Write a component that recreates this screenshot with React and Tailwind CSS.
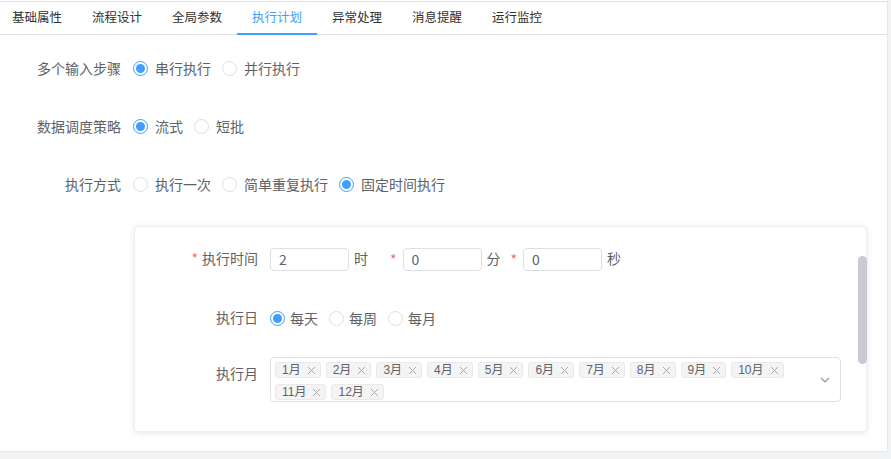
import React from "react";

const FONT = { fontFamily: '"Noto Sans CJK SC", "Noto Sans", sans-serif' };

function Radio({ checked, label, gap = "ml-[7px]", first }) {
  return (
    <div className={"flex items-center " + (first ? "" : "ml-[11px]")}>
      {checked ? (
        <span className="w-[15px] h-[15px] rounded-full border-[1.5px] border-[#409eff] bg-white flex items-center justify-center">
          <span className="w-[9px] h-[9px] rounded-full bg-[#409eff]" />
        </span>
      ) : (
        <span className="w-[15px] h-[15px] rounded-full border border-[#dcdfe6] bg-white" />
      )}
      <span className={gap + " text-[14px] text-[#606266] leading-[20px]"}>{label}</span>
    </div>
  );
}

function Tag({ text }) {
  return (
    <div className="h-[16px] flex items-center border border-[#e9e9eb] bg-[#f4f4f5] rounded-[3px] pl-[6px] pr-[4px]">
      <span className="text-[12px] leading-[14px] text-[#606266]" style={{ fontFamily: '"Liberation Sans", "Noto Sans CJK SC", sans-serif' }}>{text}</span>
      <svg className="ml-[6px]" width="9" height="9" viewBox="0 0 9 9">
        <path d="M1 1L8 8M8 1L1 8" stroke="#a8abb2" strokeWidth="1" fill="none" />
      </svg>
    </div>
  );
}

const tabs = ["基础属性", "流程设计", "全局参数", "执行计划", "异常处理", "消息提醒", "运行监控"];

export default function App() {
  const months = ["1月", "2月", "3月", "4月", "5月", "6月", "7月", "8月", "9月", "10月", "11月", "12月"];
  return (
    <div className="w-[891px] h-[459px] bg-[#f2f3f5] overflow-hidden" style={FONT}>
      <div className="w-[888px] h-[452px] bg-white border-r border-b border-[#e4e7ed] pt-px">
        <div className="border-t border-b border-[#dfe1e6]">
          <div className="flex -ml-[3px]">
            {tabs.map((t, i) => (
              <div
                key={t}
                className={
                  "w-[80px] h-[33px] -mb-px flex items-center justify-center border-b-2 text-[12.5px] pb-px " +
                  (i === 3 ? "border-[#409eff] text-[#409eff]" : "border-transparent text-[#303133]")
                }
              >
                {t}
              </div>
            ))}
          </div>
        </div>

        <div className="pt-[13px] flex flex-col gap-[18px]">
          <div className="h-[40px] flex items-center">
            <div className="w-[121px] text-right text-[14px] text-[#606266]">多个输入步骤</div>
            <div className="ml-[12px] flex items-center">
              <Radio checked first label="串行执行" />
              <Radio label="并行执行" />
            </div>
          </div>
          <div className="h-[40px] flex items-center">
            <div className="w-[121px] text-right text-[14px] text-[#606266]">数据调度策略</div>
            <div className="ml-[12px] flex items-center">
              <Radio checked first label="流式" />
              <Radio label="短批" />
            </div>
          </div>
          <div className="h-[40px] flex items-center">
            <div className="w-[121px] text-right text-[14px] text-[#606266]">执行方式</div>
            <div className="ml-[12px] flex items-center">
              <Radio first label="执行一次" />
              <Radio label="简单重复执行" />
              <Radio checked label="固定时间执行" />
            </div>
          </div>
        </div>

        <div className="relative ml-[134px] mt-[22px] w-[733px] h-[206px] bg-white border border-[#ebeef5] rounded-[4px] shadow-[0_1px_6px_rgba(0,0,0,0.10)] pt-[21px]">
          <div className="h-[23px] flex items-center">
            <div className="w-[123px] flex justify-end items-center text-[14px] text-[#606266] pb-[2px]">
              <span className="text-[#f56c6c] mr-[4px]">*</span>
              <span>执行时间</span>
            </div>
            <div className="ml-[12px] flex items-center text-[14px] text-[#606266]">
              <div className="w-[79px] h-[23px] border border-[#dcdfe6] rounded-[4px] flex items-center pl-[8px]">2</div>
              <span className="ml-[5px] pb-[2px]">时</span>
              <span className="ml-[22px] text-[#f56c6c] mr-[6px]">*</span>
              <div className="w-[79px] h-[23px] border border-[#dcdfe6] rounded-[4px] flex items-center pl-[8px]">0</div>
              <span className="ml-[5px] pb-[2px]">分</span>
              <span className="ml-[10px] text-[#f56c6c] mr-[6px]">*</span>
              <div className="w-[79px] h-[23px] border border-[#dcdfe6] rounded-[4px] flex items-center pl-[8px]">0</div>
              <span className="ml-[5px] pb-[2px]">秒</span>
            </div>
          </div>

          <div className="mt-[35px] h-[24px] flex items-center">
            <div className="w-[123px] text-right text-[14px] text-[#606266] pb-px">执行日</div>
            <div className="ml-[12px] flex items-center">
              <Radio checked first gap="ml-[5px]" label="每天" />
              <Radio gap="ml-[5px]" label="每周" />
              <Radio gap="ml-[5px]" label="每月" />
            </div>
          </div>

          <div className="mt-[27px] flex items-start">
            <div className="w-[123px] text-right text-[14px] text-[#606266] pt-[6px] leading-[20px]">执行月</div>
            <div className="ml-[12px] w-[571px] h-[45px] border border-[#dcdfe6] rounded-[4px] flex">
              <div className="flex-1 flex flex-wrap content-start gap-x-[5px] gap-y-[6px] pl-[4px] pt-[4px]">
                {months.map((m) => (
                  <Tag key={m} text={m} />
                ))}
              </div>
              <div className="w-[30px] flex items-center justify-center">
                <svg width="10" height="6" viewBox="0 0 10 6">
                  <path d="M1 1L5 5L9 1" stroke="#909399" strokeWidth="1.2" fill="none" />
                </svg>
              </div>
            </div>
          </div>

          <div className="absolute left-[723px] top-[29px] w-[9px] h-[108px] rounded-full bg-[#c8cbd1]" />
        </div>
      </div>
    </div>
  );
}
